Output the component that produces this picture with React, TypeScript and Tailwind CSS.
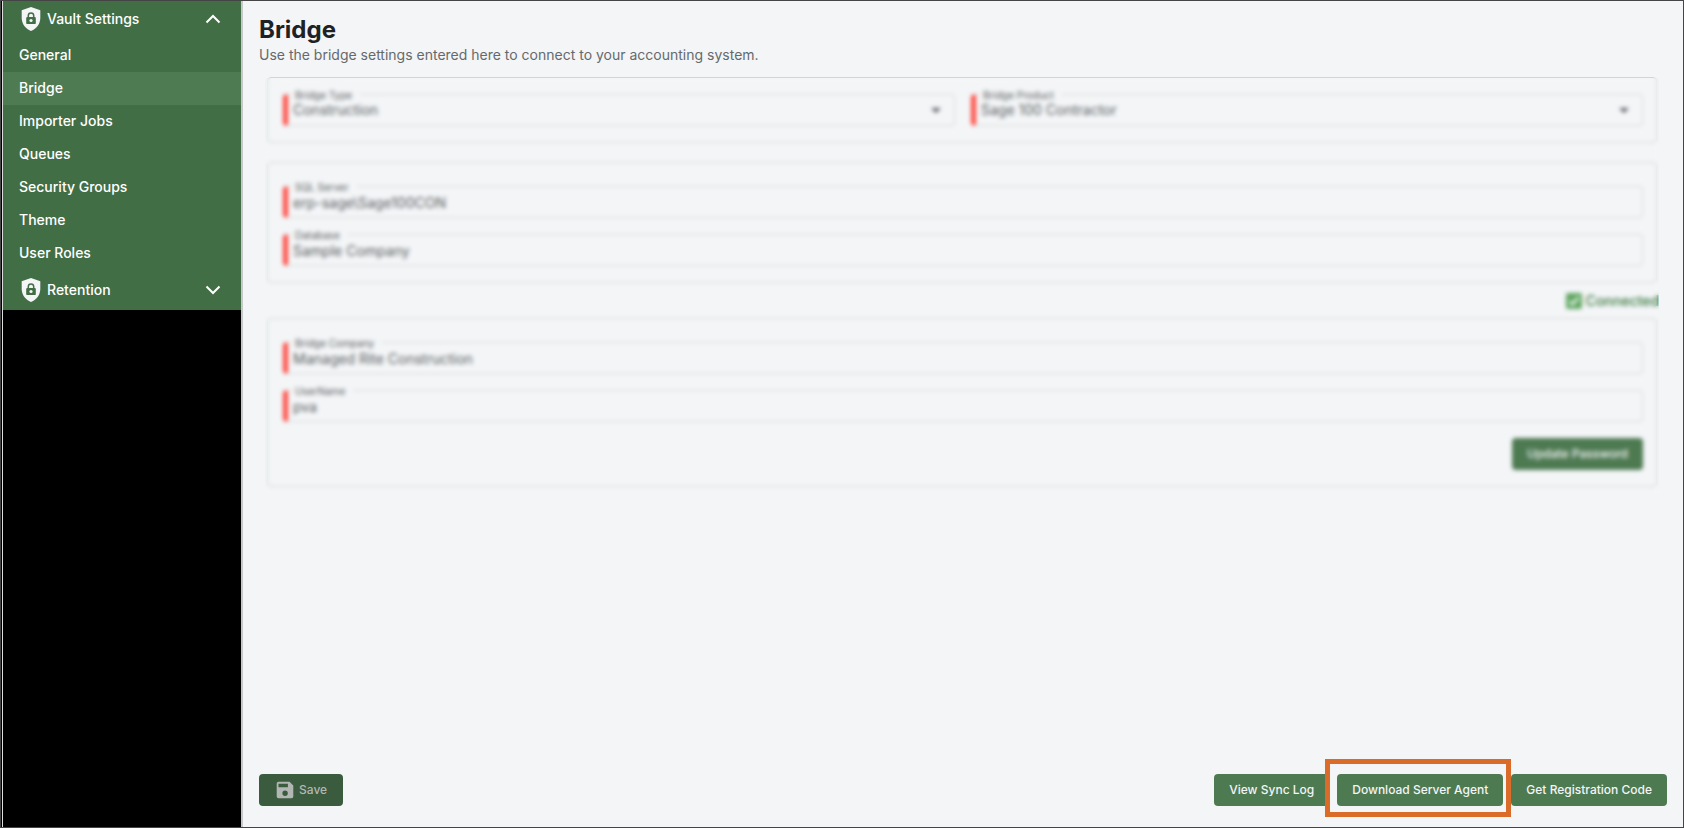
import React, { useId } from "react";

const NAV_ITEMS = [
  "General",
  "Bridge",
  "Importer Jobs",
  "Queues",
  "Security Groups",
  "Theme",
  "User Roles",
];

function ShieldLock() {
  return (
    <svg viewBox="0 0 20 24" className="h-6 w-5 shrink-0" aria-hidden="true">
      <path
        d="M10 0 19.3 3.3V11c0 5.600-3.500 10.600-9.300 13C4.200 21.600.7 16.600.7 11V3.300Z"
        fill="#f3f5f7"
      />
      <path d="M7.300 10.500V8.600a2.700 2.700 0 0 1 5.400 0v1.900" fill="none" stroke="#426e46" strokeWidth="1.500" />
      <rect x="5.200" y="9.900" width="9.600" height="7.200" rx="1.200" fill="#426e46" />
      <circle cx="10" cy="13.500" r="1.600" fill="#f3f5f7" />
    </svg>
  );
}

function Chevron({ up = false }: { up?: boolean }) {
  return (
    <svg viewBox="0 0 16 10" className="h-[10px] w-4" fill="none" stroke="#ffffff" strokeWidth="2" aria-hidden="true">
      <path d={up ? "M1.500 8.500 8 2l6.500 6.500" : "M1.500 1.500 8 8l6.500-6.500"} />
    </svg>
  );
}

function Field({
  label,
  value,
  select = false,
}: {
  label: string;
  value: string;
  select?: boolean;
}) {
  const id = useId();
  const control =
    "h-8 w-full appearance-none rounded border border-l-[5px] border-[#d6d9db] border-l-[#ff4a40] bg-transparent pl-[5px] pr-8 text-sm text-[#5a5d60] outline-none";
  return (
    <div className="relative min-w-0 flex-1">
      {select ? (
        <>
          <select id={id} defaultValue={value} className={control}>
            <option>{value}</option>
          </select>
          <svg viewBox="0 0 10 5" className="pointer-events-none absolute right-[14px] top-[14px] h-[5px] w-[10px]" aria-hidden="true">
            <path d="M0 0h10L5 5Z" fill="#5a5d60" />
          </svg>
        </>
      ) : (
        <input id={id} type="text" defaultValue={value} className={control} />
      )}
      <label
        htmlFor={id}
        className="absolute -top-[6px] left-2 bg-[#f3f5f7] pl-1 pr-2 text-[10px] leading-[14px] text-[#5a5d60]"
      >
        {label}
      </label>
    </div>
  );
}

const BUTTON = "h-8 shrink-0 rounded bg-[#4e7a52] px-[15px] text-xs font-medium text-[#f3f5f7]";

export default function App() {
  return (
    <div className="flex min-h-screen border border-[#454545] bg-[#f3f5f7] font-[Inter,'Liberation_Sans',sans-serif]">
      <nav className="flex w-[242px] shrink-0 flex-col border-r-2 border-l border-l-black border-r-[#c6c8ca] bg-black text-sm font-medium text-white">
        <div className="flex flex-1 flex-col border-l border-[#dddddd]">
          <div className="bg-[#426e46]">
            <button className="flex h-[38px] w-full items-center gap-[6px] pb-[2px] pl-[18px] pr-5">
              <ShieldLock />
              <span className="flex-1 text-left">Vault Settings</span>
              <Chevron up />
            </button>
            <ul>
              {NAV_ITEMS.map((item) => (
                <li key={item}>
                  <a
                    href="#"
                    className={
                      item === "Bridge"
                        ? "flex h-[33px] items-center bg-[#4f7b53] pb-px pl-4"
                        : "flex h-[33px] items-center pb-px pl-4"
                    }
                  >
                    {item}
                  </a>
                </li>
              ))}
            </ul>
            <button className="flex h-10 w-full items-center gap-[6px] pl-[18px] pr-5">
              <ShieldLock />
              <span className="flex-1 text-left">Retention</span>
              <Chevron />
            </button>
          </div>
        </div>
      </nav>

      <main className="flex min-w-0 flex-1 flex-col px-4 pb-[21px] pt-[13px]">
        <h1 className="text-2xl font-bold leading-8 text-[#1f2224]">Bridge</h1>
        <p className="mt-px text-sm leading-4 text-[#66696c]">
          Use the bridge settings entered here to connect to your accounting system.
        </p>

        <form className="relative ml-[6px] mr-2 mt-[14px] overflow-hidden px-[2px] pb-2">
          <section className="flex gap-4 rounded border border-[#d2d5d7] pb-4 pl-[15px] pr-[13px] pt-4">
            <Field label="Bridge Type" value="Construction" select />
            <Field label="Bridge Product" value="Sage 100 Contractor" select />
          </section>

          <section className="mt-[19px] flex flex-col gap-4 rounded border border-[#d2d5d7] pb-4 pl-[15px] pr-[13px] pt-[23px]">
            <Field label="SQL Server" value="erp-sage\Sage100CON" />
            <Field label="Database" value="Sample Company" />
          </section>

          <div className="-mr-[2px] flex h-[35px] items-center justify-end gap-1 text-sm font-medium text-[#3f7d44]">
            <svg viewBox="0 0 16 16" className="h-4 w-4" aria-hidden="true">
              <rect width="16" height="16" rx="2" fill="#62a864" />
              <path d="m3.500 8.500 3 3 6-7" fill="none" stroke="#ffffff" strokeWidth="2" />
            </svg>
            <span>Connected</span>
          </div>

          <section className="flex flex-col gap-4 rounded border border-[#d2d5d7] pb-4 pl-[15px] pr-[13px] pt-[23px]">
            <Field label="Bridge Company" value="Managed Rite Construction" />
            <Field label="UserName" value="pva" />
            <div className="flex justify-end">
              <button type="button" className={BUTTON}>Update Password</button>
            </div>
          </section>

          <div className="pointer-events-none absolute inset-x-0 bottom-0 top-px backdrop-blur-[2px]" />
        </form>

        <footer className="mt-auto flex items-center justify-between">
          <button
            disabled
            className="flex h-8 items-center gap-1 rounded bg-[#3b5b3e] px-4 text-xs font-medium text-[#b2b7b4]"
          >
            <svg viewBox="0 0 20 20" className="h-5 w-5" aria-hidden="true">
              <path
                fillRule="evenodd"
                fill="#b2b7b4"
                d="M3.500 1.800h11L18.300 5.500v11a1.800 1.800 0 0 1-1.800 1.800h-13a1.800 1.800 0 0 1-1.800-1.800v-13a1.800 1.800 0 0 1 1.800-1.700Zm0 1.900v3.600h9.400V3.700Zm6.600 6.900a2.700 2.700 0 1 0 0 5.400 2.700 2.700 0 0 0 0-5.400Z"
              />
            </svg>
            Save
          </button>
          <div className="flex gap-2">
            <button className={BUTTON}>View Sync Log</button>
            <div className="relative flex">
              <button className={BUTTON}>Download Server Agent</button>
              <div className="pointer-events-none absolute -bottom-[11px] -left-3 -right-2 -top-[15px] z-10 border-[5px] border-[#db6b28]">
                <div className="h-full w-[7px] bg-[#f3f5f7]" />
              </div>
            </div>
            <button className={BUTTON}>Get Registration Code</button>
          </div>
        </footer>
      </main>
    </div>
  );
}
